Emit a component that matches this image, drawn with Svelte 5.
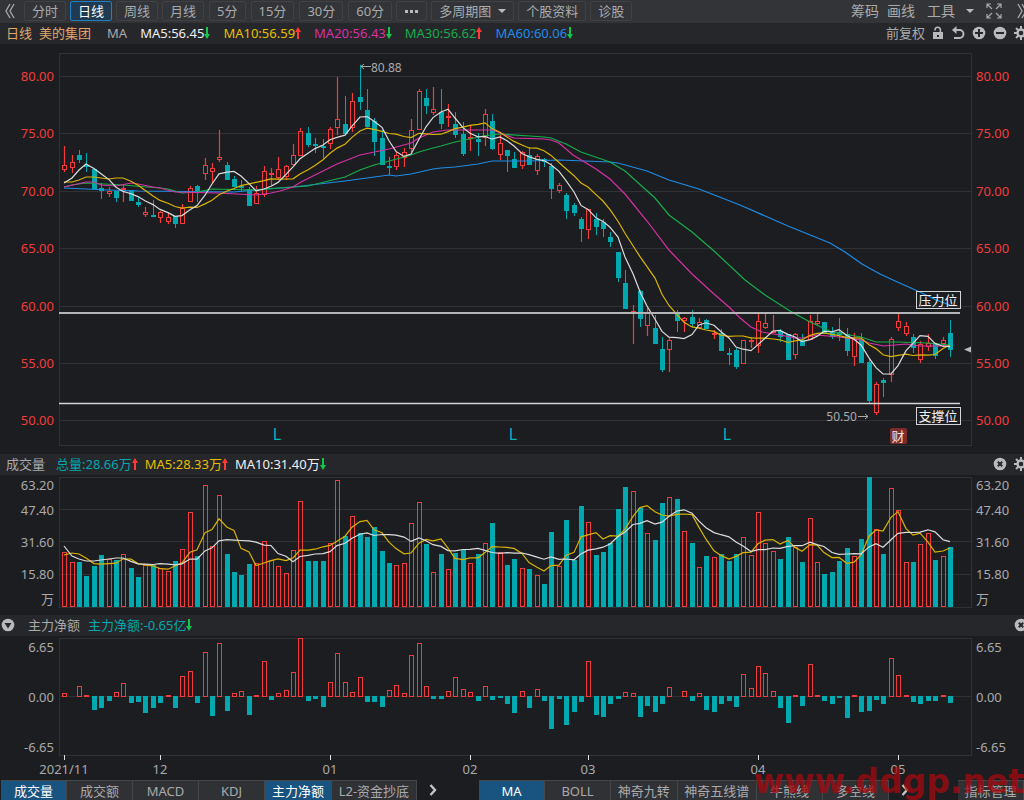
<script>
	const UP = '#f23c3c';
	const DOWN = '#00a8b0';

	const periods = ['分时', '日线', '周线', '月线', '5分', '15分', '30分', '60分'];
	let period = '日线';

	const legend = [
		{ text: 'MA5:56.45', color: '#f0f0f0', up: false },
		{ text: 'MA10:56.59', color: '#e6be00', up: true },
		{ text: 'MA20:56.43', color: '#d731a5', up: false },
		{ text: 'MA30:56.62', color: '#16ad4c', up: true },
		{ text: 'MA60:60.06', color: '#1e8ce6', up: false }
	];

	const volumeLegend = [
		{ text: '总量:28.66万', color: DOWN, up: true },
		{ text: 'MA5:28.33万', color: '#e6be00', up: true },
		{ text: 'MA10:31.40万', color: '#f0f0f0', up: false }
	];

	const subTabs = ['成交量', '成交额', 'MACD', 'KDJ', '主力净额', 'L2-资金抄底'];
	let activeSubs = ['成交量', '主力净额'];
	const mainTabs = ['MA', 'BOLL', '神奇九转', '神奇五线谱', '牛熊线', '多空线'];
	let activeMain = 'MA';

	const toggleSub = (tab) => {
		activeSubs = activeSubs.includes(tab)
			? activeSubs.filter((a) => a !== tab)
			: [...activeSubs, tab];
	};

	// direction, high, body top, body bottom, low (chart units, y grows downwards)
	const candles = `
r146,165,170,172 r155,162,168,173 g150,155,160,163 g153,165,167,172 g168,169,189,189
g183,188,191,199 r187,191,194,197 g191,191,198,202 r185,188,189,202 g190,190,201,201
g197,202,205,207 r207,212,215,217 g200,215,217,217 r211,212,218,223 r213,217,222,224
g216,216,224,228 r204,208,224,224 r186,188,202,202 g185,186,191,202 r158,165,174,180
r163,168,172,183 r130,157,160,162 g162,165,180,180 g176,179,187,187 g180,186,188,192
g187,189,206,206 r186,193,204,204 r166,171,195,197 r168,173,174,185 r157,169,178,180
r165,166,177,180 r144,155,165,165 r128,131,156,156 g127,133,145,147 g138,144,146,153
g139,146,148,158 r127,129,144,149 r77,119,128,135 g96,124,134,134 r93,101,128,132
g65,97,102,110 g89,110,127,127 g118,121,142,156 g130,138,165,165 g157,166,168,175
r152,155,167,170 r148,152,158,167 r119,130,149,152 r89,91,130,130 g89,98,106,114
r87,109,113,115 g89,112,124,129 r104,116,117,127 g112,124,135,138 g122,134,154,156
r125,137,139,151 g133,139,142,156 r109,114,138,146 g114,121,149,150 r133,143,155,160
g150,150,156,172 g152,159,168,168 r151,152,166,169 g147,155,165,165 r154,156,171,175
g158,159,162,167 g163,166,189,199 r183,185,191,193 g193,195,211,219 g203,205,213,216
g217,219,229,242 r209,209,230,239 g213,219,227,235 g219,222,229,237 g232,237,242,247
g252,252,278,282 g270,283,309,309 r305,311,314,344 g290,291,319,327 r308,313,326,336
g315,328,344,344 g337,349,370,372 r337,340,350,372 g310,312,321,332 r317,318,321,332
g310,317,324,327 r318,322,328,328 g319,320,329,329 r330,333,334,339 g329,333,351,351
g348,353,355,365 g348,350,367,369 r340,340,364,364 r337,340,341,348 r313,321,346,353
r314,323,328,329 r315,331,333,333 g329,331,337,342 g334,334,360,360 r333,334,355,359
g334,340,346,346 r315,321,340,340 r313,321,324,326 g322,322,334,334 g327,332,337,339
g318,332,335,341 g328,334,351,356 r333,339,357,366 g333,339,363,363 g358,362,401,403
r382,384,413,415 g378,380,383,397 r337,339,375,382 r313,321,328,331 r322,326,334,336
g334,337,348,353 r341,344,360,363 r334,343,347,351 g343,344,356,359 r337,340,344,347
g320,333,350,357`
		.trim()
		.split(/\s+/)
		.map((item) => {
			const [high, top, bottom, low] = item.slice(1).split(',').map(Number);
			return { up: item[0] === 'r', high, top, bottom, low };
		});

	// upper edge of every volume column
	const volumes = [
		552, 562, 562, 576, 566, 555, 559, 560, 554, 568, 577, 565, 565, 568, 571, 561, 549, 512, 556,
		485, 546, 495, 554, 572, 575, 564, 563, 541, 560, 566, 573, 550, 501, 561, 561, 561, 543, 480,
		536, 516, 533, 537, 527, 551, 563, 565, 563, 523, 502, 544, 572, 554, 569, 553, 550, 563, 554,
		543, 523, 552, 565, 559, 568, 569, 575, 584, 532, 566, 520, 560, 506, 522, 555, 552, 543, 509,
		487, 491, 508, 533, 540, 503, 497, 499, 531, 543, 567, 556, 557, 554, 561, 554, 537, 555, 512,
		543, 551, 559, 537, 547, 562, 518, 562, 574, 572, 561, 548, 556, 539, 477, 529, 554, 488, 510,
		562, 562, 544, 533, 560, 556, 547
	];

	// outer edge of every net inflow column, ZERO is the base line
	const ZERO = 697;
	const flows = [
		693, 696, 686, 695, 710, 708, 701, 692, 683, 703, 702, 713, 708, 703, 695, 708, 676, 671, 703,
		652, 716, 643, 711, 693, 691, 715, 695, 661, 700, 693, 690, 672, 638, 701, 699, 707, 682, 653,
		682, 692, 677, 702, 702, 707, 690, 685, 693, 655, 643, 686, 699, 699, 691, 677, 689, 692, 701,
		686, 700, 698, 704, 713, 691, 708, 689, 701, 729, 699, 725, 712, 702, 661, 715, 717, 704, 699,
		692, 693, 717, 706, 712, 704, 687, 696, 691, 701, 693, 710, 712, 704, 701, 707, 674, 688, 666,
		673, 691, 708, 723, 695, 706, 664, 695, 701, 704, 698, 718, 695, 712, 711, 700, 704, 658, 675,
		695, 702, 704, 701, 701, 695, 703
	];

	const barX = (i) => Math.round(64.3 + i * 7.38);

	// moving average; seed holds the values before the window is full
	const average = (values, size, seed) =>
		values
			.map((v, i) => {
				if (i < size - 1) return seed[i];
				const part = values.slice(i - size + 1, i + 1);
				return part.reduce((a, b) => a + b, 0) / size;
			})
			.map((y, i) => `${barX(i)},${y.toFixed(1)}`)
			.join(' ');

	const closes = candles.map((c) => (c.up ? c.top : c.bottom));
	const priceLines = [
		{
			color: '#1e8ce6',
			points:
				'64,188 86,189 109,190 138,191 234,192 264,189 293,187 345,181 367,178 389,175 396,176 411,174 433,169 441,168 455,167 478,164 492,161 529,161 559,160 610,162 618,163 647,171 669,180 699,189 740,205 788,226 830,243 845,252 862,264 880,274 893,280 922,293 936,300 950,305'
		},
		{
			color: '#16ad4c',
			points:
				'64,187 72,185 86,183 123,185 160,188 168,189 182,193 197,192 212,189 256,190 280,188 308,186 345,177 360,170 374,165 382,163 411,155 419,152 433,148 441,146 455,142 470,139 483,136 500,134 530,136 544,137 551,138 566,144 581,152 610,162 625,171 655,198 669,215 692,232 714,251 745,280 765,295 790,311 810,322 832,332 861,337 876,342 898,342 928,343 950,345'
		},
		{
			color: '#d731a5',
			points:
				'64,187 86,182 94,182 101,185 116,186 131,183 138,184 153,187 160,188 175,192 217,193 256,195 271,193 280,191 293,187 301,182 337,164 360,155 389,149 411,143 419,138 433,132 447,130 493,130 500,133 514,138 544,139 551,140 559,143 573,155 596,169 610,179 625,194 647,221 669,250 692,274 714,294 729,307 740,318 751,327 762,332 780,335 795,338 802,338 817,335 839,337 861,340 869,343 884,346 906,344 920,346 950,346'
		},
		{
			color: '#dab400',
			points: average(closes, 10, [182, 182, 180, 177, 177, 178, 179, 178, 178])
		},
		{ color: '#dcdcdc', points: average(closes, 5, [183, 178, 170, 164]) }
	];

	const volumeLines = [
		{ color: '#dab400', points: average(volumes, 5, [555, 553, 554, 558]) },
		{
			color: '#dcdcdc',
			points: average(volumes, 10, [546, 556, 559, 561, 561, 560, 559, 558, 558])
		}
	];

	const priceTicks = [80, 75, 70, 65, 60, 55, 50].map((v, i) => ({
		label: v.toFixed(2),
		y: 76.5 + Math.round(i * 57.4)
	}));
	const volumeTicks = [
		{ label: '63.20', y: 485 },
		{ label: '47.40', y: 510 },
		{ label: '31.60', y: 542 },
		{ label: '15.80', y: 574 },
		{ label: '万', y: 599 }
	];
	const flowTicks = [
		{ label: '6.65', y: 647 },
		{ label: '0.00', y: 697 },
		{ label: '-6.65', y: 747 }
	];
	const months = [
		{ label: '2021/11', i: 0 },
		{ label: '12', i: 13 },
		{ label: '01', i: 36 },
		{ label: '02', i: 55 },
		{ label: '03', i: 71 },
		{ label: '04', i: 94 },
		{ label: '05', i: 113 }
	];
	const dividends = [277, 513, 727];
	const gearTeeth = [0, 45, 90, 135, 180, 225, 270, 315];
</script>

{#snippet arrow(up)}
	<svg class="arrow" viewBox="0 0 6 12" width="6" height="12" aria-hidden="true">
		{#if up}
			<path d="M3 0L6 5H4V12H2V5H0Z" fill="#ff3a36" />
		{:else}
			<path d="M3 12L6 7H4V0H2V7H0Z" fill="#12c64c" />
		{/if}
	</svg>
{/snippet}

{#snippet gear()}
	<svg viewBox="0 0 14 14" width="14" height="14" aria-hidden="true">
		{#each gearTeeth as angle}
			<rect x="6" y="0" width="2" height="4" fill="#b9babc" transform="rotate({angle} 7 7)" />
		{/each}
		<circle cx="7" cy="7" r="3.5" fill="none" stroke="#b9babc" stroke-width="2.4" />
	</svg>
{/snippet}

{#snippet closeIcon()}
	<svg viewBox="0 0 14 14" width="14" height="14" aria-hidden="true">
		<circle cx="7" cy="7" r="6.3" fill="#b9babc" />
		<path d="M4.8 4.8L9.2 9.2M9.2 4.8L4.8 9.2" stroke="#26272b" stroke-width="2" />
	</svg>
{/snippet}

{#snippet axis(ticks)}
	{#each ticks as tick}
		<text x="54" y={Math.floor(tick.y) + 5} text-anchor="end">{tick.label}</text>
		<text x="976" y={Math.floor(tick.y) + 5}>{tick.label}</text>
	{/each}
{/snippet}

{#snippet lines(list)}
	{#each list as line}
		<polyline points={line.points} fill="none" stroke={line.color} stroke-width="1.2" />
	{/each}
{/snippet}

<div class="app">
	<nav class="toolbar">
		<button class="icon-btn" aria-label="收起">
			<svg viewBox="0 0 10 16" width="10" height="16" aria-hidden="true">
				<path d="M5 1L1 8L5 15M9 1L5 8L9 15" class="stroke" />
			</svg>
		</button>
		<div class="periods">
			{#each periods as item}
				<button
					class="period"
					class:minutes={item.endsWith('分')}
					class:active={period === item}
					on:click={() => (period = item)}
				>
					{item}
				</button>
			{/each}
			<button class="period dots" aria-label="更多周期"><i></i><i></i><i></i></button>
			<button class="period">多周期图<span class="caret"></span></button>
			<button class="period">个股资料</button>
			<button class="period">诊股</button>
		</div>
		<div class="tools">
			<button class="plain">筹码</button>
			<button class="plain">画线</button>
			<button class="plain tool-menu">工具<span class="caret"></span></button>
			<button class="icon-btn" aria-label="全屏">
				<svg viewBox="0 0 16 16" width="16" height="16" aria-hidden="true">
					<path
						d="M1 5V1H5M1 1L6 6M11 1H15V5M15 1L10 6M1 11V15H5M1 15L6 10M15 11V15H11M15 15L10 10"
						fill="none"
						stroke="#a9aaac"
						stroke-width="1.2"
					/>
				</svg>
			</button>
			<button class="icon-btn more" aria-label="展开">
				<svg viewBox="0 0 10 16" width="10" height="16" aria-hidden="true">
					<path d="M1 1L5 8L1 15M5 1L9 8L5 15" class="stroke" />
				</svg>
			</button>
		</div>
	</nav>

	<header class="bar">
		<span class="name">日线</span>
		<span class="name stock">美的集团</span>
		<span class="ma">MA</span>
		{#each legend as item}
			<span class="legend" style="color: {item.color}">{item.text}{@render arrow(item.up)}</span>
		{/each}
		<div class="actions">
			<button class="plain">前复权</button>
			<button class="icon-btn" aria-label="锁定">
				<svg viewBox="0 0 12 14" width="12" height="14" aria-hidden="true">
					<path d="M3 4.5V4A2.6 2.6 0 0 1 8.4 4V7" fill="none" stroke="#b9babc" stroke-width="1.6" />
					<path d="M1 6H11V13H1Z" fill="#b9babc" />
					<path d="M5 9H7V11H5Z" fill="#26272b" />
				</svg>
			</button>
			<button class="icon-btn" aria-label="撤销">
				<svg viewBox="0 0 14 14" width="14" height="14" aria-hidden="true">
					<path
						d="M3 4H8.5A3.9 3.9 0 0 1 8.5 12H3"
						fill="none"
						stroke="#b9babc"
						stroke-width="1.9"
					/>
					<path d="M5.5 0V8L1 4Z" fill="#b9babc" />
				</svg>
			</button>
			<button class="icon-btn" aria-label="放大">
				<svg viewBox="0 0 14 14" width="14" height="14" aria-hidden="true">
					<circle cx="7" cy="7" r="6.3" fill="#b9babc" />
					<path d="M3 7H11M7 3V11" stroke="#26272b" stroke-width="2" />
				</svg>
			</button>
			<button class="icon-btn" aria-label="缩小">
				<svg viewBox="0 0 14 14" width="14" height="14" aria-hidden="true">
					<circle cx="7" cy="7" r="6.3" fill="#b9babc" />
					<path d="M3 7H11" stroke="#26272b" stroke-width="2" />
				</svg>
			</button>
			<button class="icon-btn" aria-label="设置">{@render gear()}</button>
		</div>
	</header>

	<svg class="chart price" viewBox="0 44 1024 410" role="img" aria-label="美的集团 日线">
		<rect x="59.5" y="53.5" width="912" height="392" class="frame" />
		{#each priceTicks as tick}
			<line x1="59" x2="971" y1={tick.y} y2={tick.y} class="grid" />
		{/each}
		<g class="price-axis">{@render axis(priceTicks)}</g>

		{#each candles as c, i}
			{@const x = barX(i)}
			{#if c.up}
				<path
					d="M{x + 0.5} {c.high}V{c.top}M{x + 0.5} {c.bottom}V{c.low}"
					stroke={UP}
					stroke-width="1.2"
				/>
				<rect
					x={x - 1.5}
					y={c.top + 0.5}
					width="4"
					height={Math.max(c.bottom - c.top - 1, 1)}
					fill="none"
					stroke={UP}
				/>
			{:else}
				<line x1={x + 0.5} x2={x + 0.5} y1={c.high} y2={c.low} stroke={DOWN} />
				<rect x={x - 2} y={c.top} width="5" height={c.bottom - c.top} fill={DOWN} />
			{/if}
		{/each}
		{@render lines(priceLines)}

		<line x1="59" x2="960" y1="313" y2="313" stroke="#b4b5b7" stroke-width="2" />
		<line x1="59" x2="960" y1="403.5" y2="403.5" stroke="#d4d5d7" stroke-width="1.4" />
		<rect x="916.5" y="291.5" width="44" height="17" class="level" />
		<text x="938" y="305" class="level-text">压力位</text>
		<rect x="916.5" y="407.5" width="44" height="17" class="level" />
		<text x="938" y="421" class="level-text">支撑位</text>

		<path d="M361 66.5H371M364 64L361 66.5L364 69" class="pointer" />
		<text x="371" y="72" class="note">80.88</text>
		<path d="M858 416.5H868M865 414L868 416.5L865 419" class="pointer" />
		<text x="857" y="421" text-anchor="end" class="note">50.50</text>
		<path d="M964 349.5L971 346.5V352.5Z" fill="#b9babc" />

		{#each dividends as x}
			<text {x} y="440" text-anchor="middle" class="dividend">L</text>
		{/each}
		<rect x="890" y="428" width="17" height="16" rx="2" fill="#812a2c" />
		<text x="898" y="441" class="report">财</text>
	</svg>

	<header class="bar">
		<span class="title">成交量</span>
		{#each volumeLegend as item}
			<span class="legend" style="color: {item.color}">{item.text}{@render arrow(item.up)}</span>
		{/each}
		<div class="actions">
			<button class="icon-btn" aria-label="关闭成交量">{@render closeIcon()}</button>
			<button class="icon-btn" aria-label="设置成交量">{@render gear()}</button>
		</div>
	</header>

	<svg class="chart" viewBox="0 475 1024 140" role="img" aria-label="成交量">
		<rect x="59.5" y="477.5" width="912" height="130" class="frame" />
		<path d="M59 509.5H971M59 541.5H971M59 574.5H971" class="grid" />
		<g class="axis">{@render axis(volumeTicks)}</g>
		{#each volumes as top, i}
			{@const x = barX(i)}
			{#if candles[i].up}
				<rect
					x={x - 1.5}
					y={top + 0.5}
					width="4"
					height={606 - top}
					fill="none"
					stroke={UP}
				/>
			{:else}
				<rect x={x - 2} y={top} width="5" height={607 - top} fill={DOWN} />
			{/if}
		{/each}
		{@render lines(volumeLines)}
	</svg>

	<header class="bar">
		<button class="icon-btn fold" aria-label="折叠">
			<svg viewBox="0 0 14 14" width="14" height="14" aria-hidden="true">
				<circle cx="7" cy="7" r="6.3" fill="#b9babc" />
				<path d="M3.5 5H10.5L7 10.5Z" fill="#26272b" />
			</svg>
		</button>
		<span class="title flow">主力净额</span>
		<span class="legend" style="color: {DOWN}">主力净额:-0.65亿{@render arrow(false)}</span>
		<div class="actions">
			<button class="icon-btn" aria-label="关闭主力净额">{@render closeIcon()}</button>
		</div>
	</header>

	<svg class="chart" viewBox="0 636 1024 144" role="img" aria-label="主力净额">
		<rect x="59.5" y="638.5" width="912" height="117" class="frame" />
		<line x1="59" x2="971" y1="696.5" y2="696.5" class="grid" />
		<g class="axis">
			{@render axis(flowTicks)}
			{#each months as month}
				<line x1={barX(month.i) + 0.5} x2={barX(month.i) + 0.5} y1="755" y2="760" stroke="#e0e0e0" />
				<text x={barX(month.i)} y="774" text-anchor="middle">{month.label}</text>
			{/each}
		</g>
		{#each flows as y, i}
			{@const x = barX(i)}
			{#if y < ZERO}
				<rect x={x - 1.5} y={y + 0.5} width="4" height={ZERO - y - 1} fill="none" stroke={UP} />
			{:else}
				<rect x={x - 2} y="696" width="5" height={y - 696} fill={DOWN} />
			{/if}
		{/each}
	</svg>

	<footer class="tabs">
		<div class="group sub-group">
			{#each subTabs as tab}
				<button class="tab" class:active={activeSubs.includes(tab)} on:click={() => toggleSub(tab)}>
					{tab}
				</button>
			{/each}
		</div>
		<button class="next" aria-label="更多副图指标">
			<svg viewBox="0 0 8 12" width="8" height="12" aria-hidden="true">
				<path d="M1.5 1L6 6L1.5 11" fill="none" stroke="#c4c5c7" stroke-width="2.4" />
			</svg>
		</button>
		<div class="group main-group">
			{#each mainTabs as tab}
				<button class="tab" class:active={activeMain === tab} on:click={() => (activeMain = tab)}>
					{tab}
				</button>
			{/each}
		</div>
		<button class="next" aria-label="更多主图指标">
			<svg viewBox="0 0 8 12" width="8" height="12" aria-hidden="true">
				<path d="M1.5 1L6 6L1.5 11" fill="none" stroke="#c4c5c7" stroke-width="2.4" />
			</svg>
		</button>
		<button class="tab manage">指标管理</button>
	</footer>

	<div class="watermark">www.ddgp.net</div>
</div>

<style>
	:global(body) {
		margin: 0;
		background: #1c1d21;
	}
	.app {
		position: relative;
		overflow: hidden;
		background: #1c1d21;
		color: #a9aaac;
		font-family: 'Noto Sans', 'Noto Sans CJK SC', sans-serif;
		font-size: 13px;
		line-height: 18px;
	}
	button {
		margin: 0;
		padding: 0;
		border: 0;
		background: none;
		color: inherit;
		font: inherit;
		white-space: nowrap;
		cursor: pointer;
	}
	svg {
		display: block;
		flex: none;
	}
	.stroke {
		fill: none;
		stroke: #a9aaac;
		stroke-width: 1.3;
	}
	.toolbar {
		display: flex;
		align-items: center;
		box-sizing: border-box;
		height: 23px;
		padding: 0 0 1px 5px;
		background: #333438;
	}
	.periods {
		display: flex;
		gap: 4px;
		margin-left: 9px;
	}
	.period {
		display: flex;
		align-items: center;
		height: 20px;
		padding: 0 7px;
		border: 1px solid #404145;
		border-radius: 2px;
		box-sizing: border-box;
	}
	.period.minutes {
		margin-left: 1px;
	}
	.period.active {
		border-color: #1d80c3;
		background: #1f3a51;
		color: #fff;
	}
	.dots {
		gap: 2px;
		padding: 0 8px;
	}
	.dots i {
		width: 3px;
		height: 3px;
		background: #b9babc;
	}
	.caret {
		display: inline-block;
		margin-left: 7px;
		border: 4px solid transparent;
		border-top-color: #b9babc;
		border-bottom: 0;
	}
	.tools,
	.actions {
		display: flex;
		align-items: center;
		margin-left: auto;
	}
	.tools {
		gap: 8px;
		margin-right: -3px;
		font-size: 14px;
	}
	.tool-menu {
		margin-left: 4px;
	}
	.tool-menu .caret {
		margin-left: 11px;
		vertical-align: 3px;
	}
	.tools .icon-btn {
		margin-left: 4px;
	}
	.tools .more {
		margin-left: 7px;
	}
	.bar {
		display: flex;
		align-items: center;
		box-sizing: border-box;
		height: 21px;
		padding: 0 0 1px 6px;
		background: #26272b;
		white-space: nowrap;
	}
	.name {
		color: #e0a66c;
	}
	.stock {
		margin-left: 7px;
	}
	.ma {
		margin: 0 13px 0 16px;
	}
	.legend {
		display: flex;
		align-items: center;
		margin-right: 13px;
	}
	.title {
		margin-right: 11px;
	}
	.title.flow {
		margin-right: 8px;
	}
	.title ~ .legend {
		margin-right: 7px;
	}
	.fold {
		margin: 0 13px 0 -5px;
	}
	.actions {
		gap: 7px;
		margin-right: -4px;
	}
	.chart {
		width: 100%;
		height: auto;
	}
	.frame {
		fill: none;
		stroke: #303135;
	}
	.grid {
		stroke: #303135;
	}
	.price-axis {
		fill: #f23c3c;
	}
	.axis {
		fill: #a9aaac;
	}
	.level {
		fill: none;
		stroke: #d4d5d7;
	}
	.level-text {
		fill: #f0f0f0;
		text-anchor: middle;
	}
	.pointer {
		fill: none;
		stroke: #a9aaac;
	}
	.note {
		fill: #a9aaac;
		font-size: 12px;
	}
	.dividend {
		fill: #00b8c0;
		font-size: 16px;
	}
	.report {
		fill: #f0e6e6;
		text-anchor: middle;
	}
	.tabs {
		display: flex;
		height: 20px;
		padding-left: 1px;
		overflow: hidden;
	}
	.group {
		display: flex;
		border-top: 1px solid #45464a;
	}
	.group .tab {
		flex: 1 0 auto;
	}
	.sub-group {
		min-width: 416px;
	}
	.main-group {
		min-width: 410px;
		margin-left: 30px;
	}
	.tab {
		min-width: 66px;
		padding: 0 5px;
		border-right: 1px solid #45464a;
		background: #303135;
	}
	.tab.active {
		background: #19537f;
		color: #fff;
	}
	.next {
		display: flex;
		align-items: center;
		justify-content: center;
		width: 32px;
	}
	.manage {
		margin-left: auto;
		border-top: 1px solid #45464a;
	}
	.watermark {
		position: absolute;
		right: 0;
		bottom: -1px;
		color: rgba(165, 8, 14, 0.75);
		font: bold 33px/38px 'DejaVu Sans', sans-serif;
		pointer-events: none;
	}
</style>
